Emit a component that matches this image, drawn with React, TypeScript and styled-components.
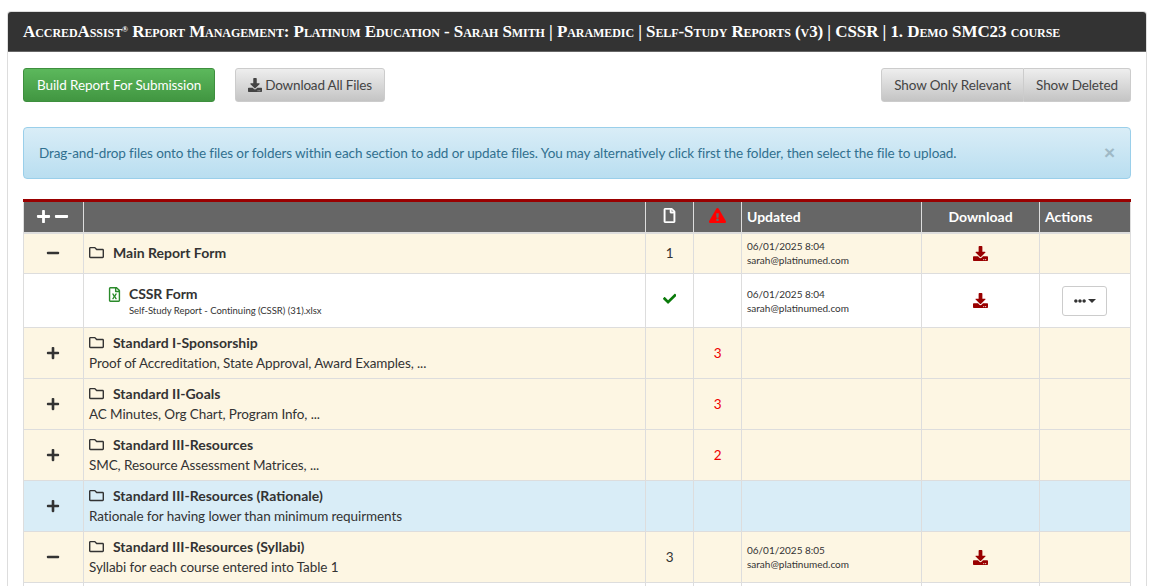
import React from "react";
import styled, { createGlobalStyle } from "styled-components";
import {
  FaCheck,
  FaDownload,
  FaEllipsisH,
  FaExclamationTriangle,
  FaMinus,
  FaPlus,
  FaRegFile,
  FaRegFileExcel,
  FaRegFolder,
} from "react-icons/fa";

const GlobalStyle = createGlobalStyle`
  html, body {
    margin: 0;
    height: 586px;
    overflow: hidden;
    background: #fff;
  }
  body {
    font-family: Lato, "Noto Sans", sans-serif;
    font-size: 13.5px;
    letter-spacing: -0.09px;
    color: #333;
  }
`;

const Panel = styled.div`
  margin: 11px 13px 0 7px;
  border: 1px solid #ddd;
  border-radius: 4px 4px 0 0;
  border-bottom: 0;
`;

const PanelHeader = styled.div`
  height: 40px;
  box-sizing: border-box;
  padding: 0 15px;
  display: flex;
  align-items: center;
  background: #333;
  border-bottom: 1px solid #666;
  border-radius: 3px 3px 0 0;
  color: #fff;
  font-family: "Liberation Serif", serif;
  font-variant: small-caps;
  font-weight: 700;
  font-size: 17px;
  letter-spacing: -0.07px;
  white-space: nowrap;
`;

const Reg = styled.span`
  font-size: 8px;
  align-self: flex-start;
  margin-top: 13px;
`;

const PanelBody = styled.div`
  padding: 16px 15px 0;
`;

const Toolbar = styled.div`
  display: flex;
  align-items: center;
  gap: 20px;
  margin-bottom: 25px;
`;

const Spacer = styled.div`
  flex: 1;
`;

const Button = styled.div<{ $tone?: "green" | "gray" }>`
  height: 34px;
  box-sizing: border-box;
  padding: 0 ${(p) => (p.$tone === "green" ? 13 : 12)}px;
  display: flex;
  align-items: center;
  gap: 3px;
  border-radius: 3px;
  border: 1px solid ${(p) => (p.$tone === "green" ? "#3e8f3e" : "#ccc")};
  background: ${(p) =>
    p.$tone === "green"
      ? "linear-gradient(#5cb85c, #419641)"
      : "linear-gradient(#eee, #c4c4c4)"};
  color: ${(p) => (p.$tone === "green" ? "#fff" : "#444")};
  letter-spacing: ${(p) => (p.$tone === "green" ? -0.09 : -0.18)}px;
  white-space: nowrap;
`;

const ButtonGroup = styled.div`
  display: flex;

  & > div {
    letter-spacing: -0.1px;
  }
  & > div:first-child {
    border-radius: 3px 0 0 3px;
  }
  & > div:last-child {
    border-radius: 0 3px 3px 0;
    border-left: 0;
  }
`;

const Alert = styled.div`
  height: 52px;
  box-sizing: border-box;
  padding: 0 15px;
  display: flex;
  align-items: center;
  justify-content: space-between;
  border: 1px solid #9acfea;
  border-radius: 4px;
  background: linear-gradient(#d9edf7, #b9def0);
  color: #31708f;
  margin-bottom: 20px;
`;

const Close = styled.span`
  font-family: "Liberation Sans", sans-serif;
  font-weight: 700;
  font-size: 19px;
  color: #9fb9c6;
`;

const Table = styled.table`
  width: 1107px;
  table-layout: fixed;
  border-collapse: collapse;
  border-top: 3px solid #900;
`;

const HeadCell = styled.th<{ $center?: boolean }>`
  height: 32px;
  box-sizing: border-box;
  padding: 0 5px;
  background: #666;
  color: #fff;
  font-weight: 700;
  font-size: 14px;
  letter-spacing: 0;
  text-align: ${(p) => (p.$center ? "center" : "left")};
  border: 1px solid #ddd;
  border-top: 0;
  border-bottom: 2px solid #ddd;
`;

const Row = styled.tr<{ $tone?: "cream" | "blue" | "white"; $h: number }>`
  height: ${(p) => p.$h}px;
  background: ${(p) =>
    p.$tone === "blue" ? "#d9edf7" : p.$tone === "white" ? "#fff" : "#fdf6e3"};
`;

const Cell = styled.td<{ $center?: boolean; $color?: string }>`
  padding: 0 5px;
  border: 1px solid #ddd;
  text-align: ${(p) => (p.$center ? "center" : "left")};
  color: ${(p) => p.$color || "#333"};
  vertical-align: middle;
`;

const HeadIcons = styled.div`
  display: flex;
  justify-content: center;
  gap: 3px;
  font-size: 15px;
  padding-right: 2px;
`;

const HeadFile = styled(FaRegFile)`
  font-size: 15px;
  stroke: currentColor;
  stroke-width: 16px;
`;

const Toggle = styled.div`
  display: flex;
  justify-content: center;
  font-size: 14px;
  color: #333;
  padding-right: 2px;
`;

const FolderTitle = styled.div<{ $solo?: boolean }>`
  display: flex;
  align-items: center;
  gap: 9px;
  padding-bottom: ${(p) => (p.$solo ? 2 : 0)}px;
  font-weight: 700;
  font-size: 14px;
  letter-spacing: 0;
  color: #333;
`;

const FolderIcon = styled(FaRegFolder)`
  font-size: 15px;
`;

const Subtitle = styled.div`
  margin: 4px 0 1px;
`;

const FileRow = styled.div`
  display: flex;
  gap: 7px;
  padding-left: 18px;
`;

const FileIcon = styled(FaRegFileExcel)`
  font-size: 15px;
  color: #2a8a2a;
  margin-top: 2px;
`;

const FileName = styled.div`
  font-weight: 700;
  font-size: 14px;
  letter-spacing: -0.1px;
`;

const FilePath = styled.div`
  font-size: 9.5px;
  letter-spacing: -0.03px;
  margin-top: 3px;
`;

const Updated = styled.div`
  font-size: 10px;
  letter-spacing: 0;
  line-height: 14px;
`;

const DownloadIcon = styled(FaDownload)`
  font-size: 15px;
  color: #900;
  display: block;
  margin: 0 auto;
`;

const ActionButton = styled.div`
  width: 45px;
  height: 30px;
  box-sizing: border-box;
  margin-left: 17px;
  display: flex;
  align-items: center;
  justify-content: center;
  gap: 2px;
  border: 1px solid #ccc;
  border-radius: 3px;
  background: #fff;
  font-size: 12px;
`;

const Caret = styled.span`
  width: 0;
  height: 0;
  border-left: 4px solid transparent;
  border-right: 4px solid transparent;
  border-top: 4px solid #333;
`;

type Section = {
  title: string;
  sub?: string;
  open?: boolean;
  tone?: "cream" | "blue";
  files?: string;
  missing?: string;
  updated?: string;
  h: number;
};

const EMAIL = "sarah@platinumed.com";

const first: Section = {
  title: "Main Report Form",
  open: true,
  files: "1",
  updated: "06/01/2025 8:04",
  h: 41,
};

const sections: Section[] = [
  {
    title: "Standard I-Sponsorship",
    sub: "Proof of Accreditation, State Approval, Award Examples, ...",
    missing: "3",
    h: 51,
  },
  { title: "Standard II-Goals", sub: "AC Minutes, Org Chart, Program Info, ...", missing: "3", h: 51 },
  { title: "Standard III-Resources", sub: "SMC, Resource Assessment Matrices, ...", missing: "2", h: 51 },
  {
    title: "Standard III-Resources (Rationale)",
    sub: "Rationale for having lower than minimum requirments",
    tone: "blue",
    h: 51,
  },
  {
    title: "Standard III-Resources (Syllabi)",
    sub: "Syllabi for each course entered into Table 1",
    open: true,
    files: "3",
    updated: "06/01/2025 8:05",
    h: 51,
  },
];

const SectionRow = ({ s }: { s: Section }) => (
  <Row $h={s.h} $tone={s.tone}>
    <Cell $center>
      <Toggle>{s.open ? <FaMinus /> : <FaPlus />}</Toggle>
    </Cell>
    <Cell>
      <FolderTitle $solo={!s.sub}>
        <FolderIcon />
        {s.title}
      </FolderTitle>
      {s.sub && <Subtitle>{s.sub}</Subtitle>}
    </Cell>
    <Cell $center>{s.files}</Cell>
    <Cell $center $color="#e00">
      {s.missing}
    </Cell>
    <Cell>
      {s.updated && (
        <Updated>
          {s.updated}
          <br />
          {EMAIL}
        </Updated>
      )}
    </Cell>
    <Cell>{s.updated && <DownloadIcon />}</Cell>
    <Cell />
  </Row>
);

export default function App() {
  return (
    <>
      <GlobalStyle />
      <Panel>
        <PanelHeader>
          AccredAssist<Reg>®</Reg>&nbsp;Report Management: Platinum Education - Sarah Smith | Paramedic | Self-Study Reports (v3) | CSSR | 1. Demo SMC23 course
        </PanelHeader>
        <PanelBody>
          <Toolbar>
            <Button $tone="green">Build Report For Submission</Button>
            <Button>
              <FaDownload size={14} /> Download All Files
            </Button>
            <Spacer />
            <ButtonGroup>
              <Button>Show Only Relevant</Button>
              <Button>Show Deleted</Button>
            </ButtonGroup>
          </Toolbar>
          <Alert>
            Drag-and-drop files onto the files or folders within each section to add or update files. You may alternatively click first the folder, then select the file to upload.
            <Close>×</Close>
          </Alert>
          <Table>
            <colgroup>
              <col style={{ width: 60 }} />
              <col style={{ width: 562 }} />
              <col style={{ width: 48 }} />
              <col style={{ width: 48 }} />
              <col style={{ width: 180 }} />
              <col style={{ width: 118 }} />
              <col style={{ width: 91 }} />
            </colgroup>
            <thead>
              <tr>
                <HeadCell $center>
                  <HeadIcons>
                    <FaPlus />
                    <FaMinus />
                  </HeadIcons>
                </HeadCell>
                <HeadCell />
                <HeadCell $center>
                  <HeadFile />
                </HeadCell>
                <HeadCell $center>
                  <FaExclamationTriangle color="#f00" size={17} />
                </HeadCell>
                <HeadCell>Updated</HeadCell>
                <HeadCell $center>Download</HeadCell>
                <HeadCell>Actions</HeadCell>
              </tr>
            </thead>
            <tbody>
              <SectionRow s={first} />
              <Row $h={54} $tone="white">
                <Cell />
                <Cell>
                  <FileRow>
                    <FileIcon />
                    <div>
                      <FileName>CSSR Form</FileName>
                      <FilePath>Self-Study Report - Continuing (CSSR) (31).xlsx</FilePath>
                    </div>
                  </FileRow>
                </Cell>
                <Cell $center $color="#0a7a0a">
                  <FaCheck />
                </Cell>
                <Cell />
                <Cell>
                  <Updated>
                    06/01/2025 8:04
                    <br />
                    {EMAIL}
                  </Updated>
                </Cell>
                <Cell>
                  <DownloadIcon />
                </Cell>
                <Cell>
                  <ActionButton>
                    <FaEllipsisH />
                    <Caret />
                  </ActionButton>
                </Cell>
              </Row>
              {sections.map((s) => (
                <SectionRow key={s.title} s={s} />
              ))}
              <Row $h={40} $tone="white">
                <Cell />
                <Cell />
                <Cell />
                <Cell />
                <Cell />
                <Cell />
                <Cell />
              </Row>
            </tbody>
          </Table>
        </PanelBody>
      </Panel>
    </>
  );
}
